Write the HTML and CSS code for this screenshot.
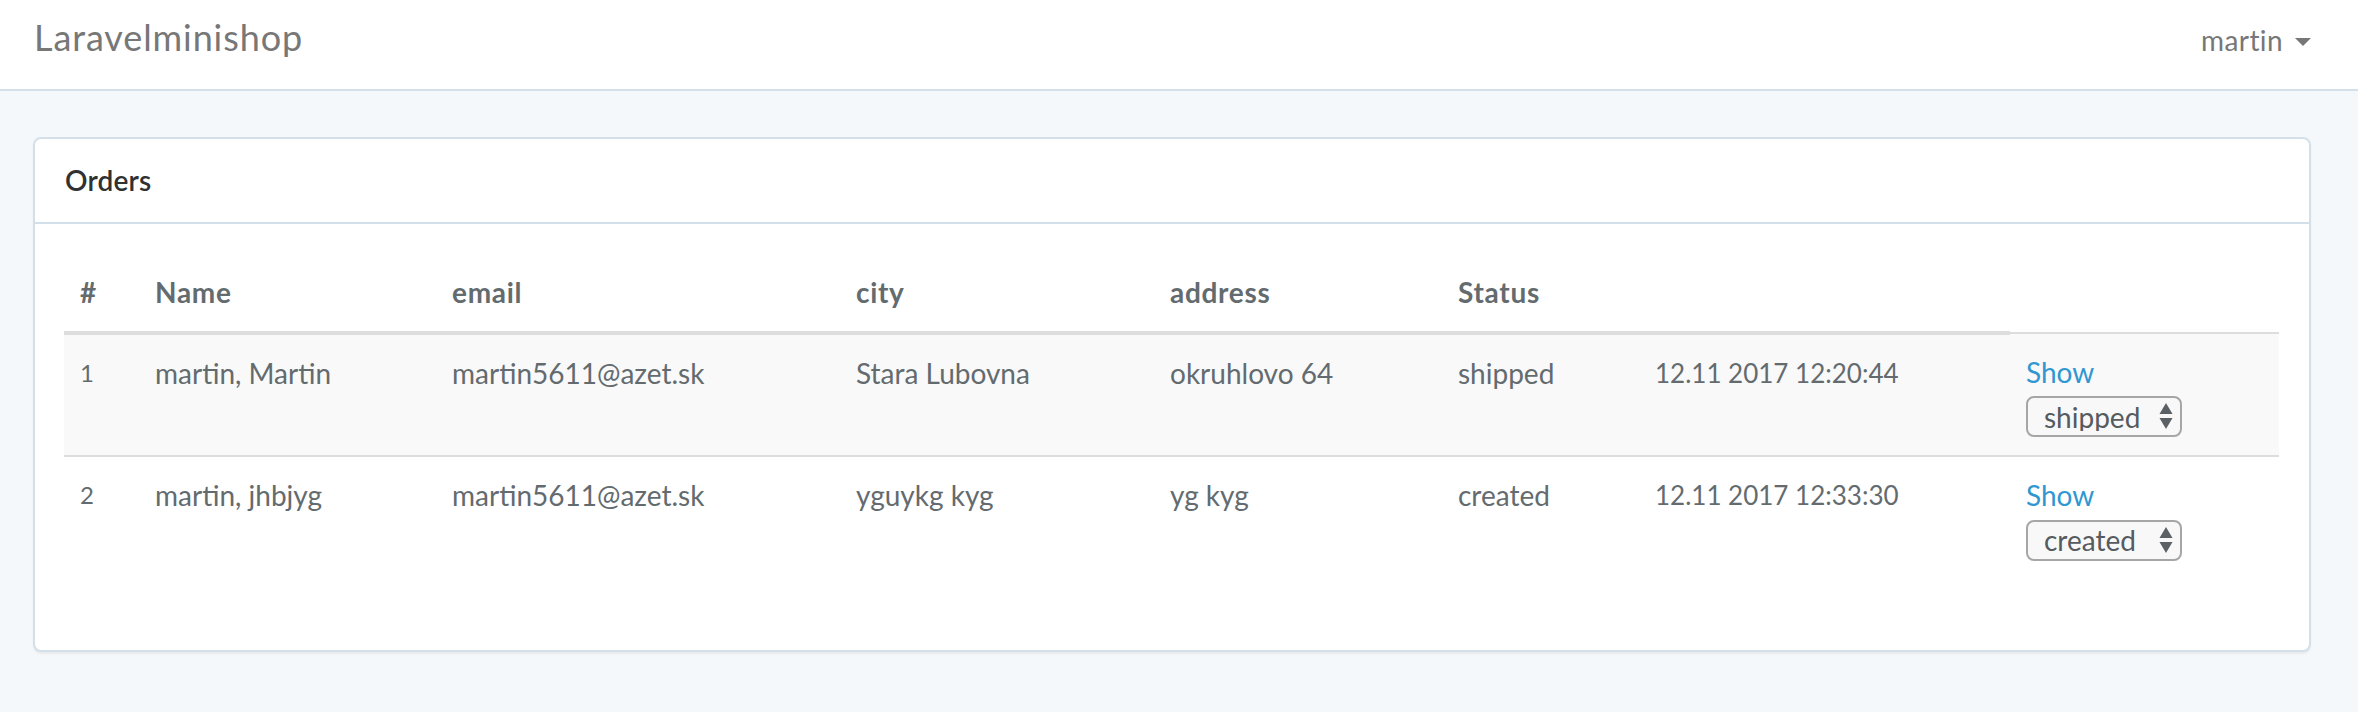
FILE: index.html
```html
<!DOCTYPE html>
<html lang="en">
<head>
<meta charset="utf-8">
<title>Laravelminishop</title>
<link rel="stylesheet" href="styles.css">
</head>
<body>
<nav class="navbar">
  <a class="brand" href="#">Laravelminishop</a>
  <a class="user" href="#">martin <span class="caret"></span></a>
</nav>
<main class="page">
  <section class="panel">
    <div class="panel-heading">Orders</div>
    <div class="panel-body">
      <table class="orders">
        <colgroup>
          <col class="w-num"><col class="w-name"><col class="w-email"><col class="w-city">
          <col class="w-addr"><col class="w-status"><col class="w-date"><col class="w-act">
        </colgroup>
        <thead>
          <tr><th>#</th><th>Name</th><th>email</th><th>city</th><th>address</th><th>Status</th><th></th></tr>
        </thead>
        <tbody>
          <tr>
            <td class="num">1</td><td>martin, Martin</td><td>martin5611@azet.sk</td><td>Stara Lubovna</td><td>okruhlovo 64</td><td>shipped</td><td class="date">12.11 2017 12:20:44</td>
            <td>
              <a class="show" href="#">Show</a>
              <span class="select-wrap">
                <select class="status"><option selected>shipped</option><option>created</option></select>
                <svg class="arrows" width="14" height="27" viewBox="0 0 14 27"><path d="M7 0 L13.5 11 L0.5 11 Z" fill="#5b6064"/><path d="M0.5 15 L13.5 15 L7 26 Z" fill="#5b6064"/></svg>
              </span>
            </td>
          </tr>
          <tr>
            <td class="num">2</td><td>martin, jhbjyg</td><td>martin5611@azet.sk</td><td>yguykg kyg</td><td>yg kyg</td><td>created</td><td class="date">12.11 2017 12:33:30</td>
            <td>
              <a class="show" href="#">Show</a>
              <span class="select-wrap">
                <select class="status"><option>shipped</option><option selected>created</option></select>
                <svg class="arrows" width="14" height="27" viewBox="0 0 14 27"><path d="M7 0 L13.5 11 L0.5 11 Z" fill="#5b6064"/><path d="M0.5 15 L13.5 15 L7 26 Z" fill="#5b6064"/></svg>
              </span>
            </td>
          </tr>
        </tbody>
      </table>
    </div>
  </section>
</main>
</body>
</html>
```

FILE: styles.css
```css
html, body {
  margin: 0;
  padding: 0;
}
body {
  background: #f5f8fa;
  font-family: "Lato", "Liberation Sans", sans-serif;
  font-size: 28px;
  line-height: 1.6;
  color: #636b6f;
  min-height: 712px;
}
a { text-decoration: none; }

.navbar {
  display: flex;
  align-items: baseline;
  justify-content: space-between;
  height: 89px;
  box-sizing: content-box;
  background: #fff;
  border-bottom: 2px solid #d3e0e9;
  padding: 0 47px 0 34px;
}
.brand {
  font-size: 36px;
  line-height: 1.2;
  letter-spacing: 0.9px;
  padding-top: 16px;
  color: #777;
}
.user {
  font-size: 28px;
  line-height: 1.2;
  letter-spacing: 0.4px;
  color: #777;
  display: flex;
  align-items: center;
  gap: 12px;
}
.caret {
  display: inline-block;
  width: 0;
  height: 0;
  border-top: 8px solid #777;
  border-left: 8px solid transparent;
  border-right: 8px solid transparent;
  margin-top: 2px;
}

.page {
  padding: 46px 47px 0 33px;
}
.panel {
  background: #fff;
  border: 2px solid #d3e0e9;
  border-radius: 8px;
  box-shadow: 0 2px 2px rgba(0, 0, 0, 0.05);
}
.panel-heading {
  padding: 19px 30px 19px;
  border-bottom: 2px solid #d3e0e9;
  color: #2f3133;
  font-weight: 600;
  letter-spacing: 0.2px;
  line-height: 44.8px;
}
.panel-body {
  padding: 30px 30px 30px 29px;
}

.orders {
  width: 100%;
  border-collapse: collapse;
  border-spacing: 0;
  margin-bottom: 41px;
  table-layout: fixed;
}
.w-num { width: 75px; }
.w-name { width: 297px; }
.w-email { width: 404px; }
.w-city { width: 314px; }
.w-addr { width: 288px; }
.w-status { width: 197px; }
.w-date { width: 371px; }

.orders th,
.orders td {
  padding: 16px;
  line-height: 44.8px;
  text-align: left;
  vertical-align: top;
  white-space: nowrap;
}
.orders th {
  font-weight: 700;
  letter-spacing: 0.7px;
  vertical-align: bottom;
  border-bottom: 4px solid #ddd;
}
.orders td {
  border-top: 2px solid #ddd;
}
.orders tbody tr:nth-child(odd) {
  background: #f9f9f9;
}
.orders .num {
  font-size: 24px;
}
.orders .date {
  font-size: 26px;
}

.show {
  display: block;
  color: #3097d1;
}
.select-wrap {
  position: relative;
  display: inline-block;
  margin-top: 2px;
  vertical-align: top;
}
.status {
  -webkit-appearance: none;
  appearance: none;
  display: block;
  width: 156px;
  height: 41px;
  box-sizing: border-box;
  border: 2px solid #a6a6a6;
  border-radius: 8px;
  background: #f8f8f8;
  font-family: "Lato", "Liberation Sans", sans-serif;
  font-size: 28px;
  line-height: 1;
  color: #555b5f;
  padding: 0 0 0 16px;
  margin: 0;
}
.arrows {
  position: absolute;
  right: 9px;
  top: 7px;
  pointer-events: none;
}
```
